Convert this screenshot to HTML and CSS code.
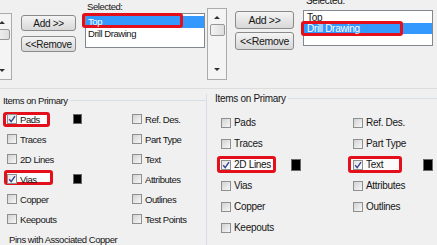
FILE: index.html
```html
<!DOCTYPE html>
<html lang="en">
  <head>
    <meta charset="UTF-8" />
    <meta name="viewport" content="width=device-width, initial-scale=1.0" />
    <title>Drill Drawing Layers</title>
    <link rel="stylesheet" href="styles.css">
  </head>
  <body>
    <div class="screen">
      <section class="panel panel-a">
        <div class="transfer">
          <div class="scrollbar">
            <span class="arrow up"></span>
            <span class="thumb"></span>
            <span class="arrow down"></span>
          </div>
          <div class="buttons">
            <button class="btn">Add &gt;&gt;</button>
            <button class="btn">&lt;&lt;Remove</button>
          </div>
          <div class="selected">
            <div class="caption">Selected:</div>
            <ul class="listbox">
              <li class="item active marked mark-top">Top</li>
              <li class="item">Drill Drawing</li>
            </ul>
          </div>
        </div>

        <div class="group">
          <div class="group-head"><span>Items on Primary</span></div>
          <div class="options">
            <div class="opt marked mark-pads"><span class="box checked"><svg width="8" height="8" viewBox="0 0 8 8"><polyline points="1.2,4.2 3.2,6.6 7,1.2" /></svg></span><span class="name">Pads</span><span class="swatch"></span></div>
            <div class="opt"><span class="box"></span><span class="name">Traces</span></div>
            <div class="opt"><span class="box"></span><span class="name">2D Lines</span></div>
            <div class="opt marked mark-vias"><span class="box checked"><svg width="8" height="8" viewBox="0 0 8 8"><polyline points="1.2,4.2 3.2,6.6 7,1.2" /></svg></span><span class="name">Vias</span><span class="swatch"></span></div>
            <div class="opt"><span class="box"></span><span class="name">Copper</span></div>
            <div class="opt"><span class="box"></span><span class="name">Keepouts</span></div>
            <div class="opt"><span class="box"></span><span class="name">Ref. Des.</span></div>
            <div class="opt"><span class="box"></span><span class="name">Part Type</span></div>
            <div class="opt"><span class="box"></span><span class="name">Text</span></div>
            <div class="opt"><span class="box"></span><span class="name">Attributes</span></div>
            <div class="opt"><span class="box"></span><span class="name">Outlines</span></div>
            <div class="opt"><span class="box"></span><span class="name">Test Points</span></div>
          </div>
          <div class="group-head sub"><span>Pins with Associated Copper</span></div>
        </div>
      </section>

      <section class="panel panel-b">
        <div class="transfer">
          <div class="scrollbar">
            <span class="arrow up"></span>
            <span class="thumb"></span>
            <span class="arrow down"></span>
          </div>
          <div class="buttons">
            <button class="btn">Add &gt;&gt;</button>
            <button class="btn">&lt;&lt;Remove</button>
          </div>
          <div class="selected">
            <div class="caption">Selected:</div>
            <ul class="listbox">
              <li class="item">Top</li>
              <li class="item active marked mark-drill">Drill Drawing</li>
            </ul>
          </div>
        </div>

        <div class="group">
          <div class="group-head"><span>Items on Primary</span></div>
          <div class="options">
            <div class="opt"><span class="box"></span><span class="name">Pads</span></div>
            <div class="opt"><span class="box"></span><span class="name">Traces</span></div>
            <div class="opt marked mark-lines"><span class="box checked"><svg width="8" height="8" viewBox="0 0 8 8"><polyline points="1.2,4.2 3.2,6.6 7,1.2" /></svg></span><span class="name">2D Lines</span><span class="swatch"></span></div>
            <div class="opt"><span class="box"></span><span class="name">Vias</span></div>
            <div class="opt"><span class="box"></span><span class="name">Copper</span></div>
            <div class="opt"><span class="box"></span><span class="name">Keepouts</span></div>
            <div class="opt"><span class="box"></span><span class="name">Ref. Des.</span></div>
            <div class="opt"><span class="box"></span><span class="name">Part Type</span></div>
            <div class="opt marked mark-text"><span class="box checked"><svg width="8" height="8" viewBox="0 0 8 8"><polyline points="1.2,4.2 3.2,6.6 7,1.2" /></svg></span><span class="name">Text</span><span class="swatch"></span></div>
            <div class="opt"><span class="box"></span><span class="name">Attributes</span></div>
            <div class="opt"><span class="box"></span><span class="name">Outlines</span></div>
          </div>
        </div>
      </section>
    </div>
  </body>
</html>
```

FILE: styles.css
```css
body {
  margin: 0;
  background-color: #f0f0f0;
  font-family: "Liberation Sans", Arial, sans-serif;
  font-size: 9.5px;
  letter-spacing: -0.45px;
  color: #151515;
  overflow: hidden;
}
.screen {
  display: flex;
  width: 437px;
  height: 245px;
  overflow: hidden;
}
.panel {
  flex: none;
}
.panel-a {
  width: 207px;
}
.panel-b {
  width: 230px;
  font-size: 10px;
  letter-spacing: -0.3px;
}

/* top: list transfer */
.transfer {
  display: flex;
  align-items: flex-start;
  height: 88px;
  border-bottom: 1px solid #dcdcdc;
}
.scrollbar {
  box-sizing: border-box;
  width: 20px;
  flex: none;
  display: flex;
  flex-direction: column;
  align-items: center;
  border: 1px solid #ababab;
  background-color: #f4f4f4;
}
.arrow {
  width: 0;
  height: 0;
  border-left: 3px solid transparent;
  border-right: 3px solid transparent;
}
.arrow.up {
  border-bottom: 3px solid #303030;
}
.arrow.down {
  margin-top: auto;
  border-top: 3px solid #303030;
}
.thumb {
  box-sizing: border-box;
  width: 15px;
  height: 11px;
  border: 1px solid #979797;
  border-radius: 2px;
  background: linear-gradient(to right, #f3f3f3, #dedede);
}
.buttons {
  display: flex;
  flex-direction: column;
  flex: none;
}
.btn {
  box-sizing: border-box;
  padding: 0;
  border: 1px solid #8a8a8a;
  border-radius: 3px;
  background: linear-gradient(#f4f4f4, #e6e6e6 50%, #d8d8d8);
  font: inherit;
  font-size: 10px;
  letter-spacing: -0.3px;
  color: #151515;
}
.selected {
  flex: none;
}
.caption {
  line-height: 13px;
}
.listbox {
  box-sizing: border-box;
  margin: 0;
  padding: 0;
  list-style: none;
  border: 1px solid #828790;
  background-color: #fff;
}
.item {
  white-space: nowrap;
}
.item.active {
  background-color: #3399ff;
  color: #fff;
}

.panel-a .scrollbar {
  margin: 13px 0 0 -8px;
  height: 67px;
  padding: 7px 0 7px;
}
.panel-a .arrow.up {
  margin-bottom: 5px;
}
.panel-a .buttons {
  margin: 15px 0 0 9px;
  gap: 5px;
}
.panel-a .btn {
  width: 55px;
  height: 16px;
}
.panel-a .selected {
  margin-left: 9px;
}
.panel-a .caption {
  padding-left: 2px;
}
.panel-a .listbox {
  width: 120px;
  height: 35px;
  padding-top: 2px;
}
.panel-a .item {
  line-height: 12px;
  padding-left: 2px;
}

.panel-b .scrollbar {
  margin-top: 8px;
  height: 72px;
  padding: 7px 0 8px;
}
.panel-b .arrow.up {
  margin-bottom: 5px;
}
.panel-b .thumb {
  height: 12px;
}
.panel-b .buttons {
  margin: 11px 0 0 8px;
  gap: 3px;
}
.panel-b .btn {
  width: 59px;
  height: 18px;
  font-size: 10.5px;
}
.panel-b .selected {
  margin: -5px 0 0 9px;
}
.panel-b .caption {
  line-height: 12px;
  margin-bottom: 3px;
  padding-left: 3px;
}
.panel-b .listbox {
  width: 130px;
  height: 36px;
  padding-top: 1px;
}
.panel-b .item {
  line-height: 11px;
  padding-left: 3px;
}

/* bottom: group box */
.group-head {
  display: flex;
  align-items: center;
  height: 12px;
  white-space: nowrap;
}
.group-head::after {
  content: "";
  flex: 1;
  margin-left: 2px;
  border-top: 1px solid #d5dfe5;
}
.panel-a .group {
  border-right: 1px solid #d5dfe5;
}
.panel-a .group-head {
  margin-top: 5px;
  padding-left: 3px;
}
.panel-a .group-head.sub {
  margin-top: 4px;
  padding-left: 9px;
}
.panel-a .group-head.sub::after {
  border-top-color: transparent;
}
.panel-b .group-head {
  margin-top: 3px;
  padding-left: 8px;
}
.options {
  display: grid;
  grid-auto-flow: column;
}
.panel-a .options {
  padding: 3px 0 0 7px;
  grid-template-columns: 125px auto;
  grid-template-rows: repeat(6, 20px);
}
.panel-b .options {
  padding: 8px 0 0 14px;
  grid-template-columns: 132px auto;
  grid-template-rows: repeat(6, 21px);
}
.opt {
  display: flex;
  align-items: center;
  position: relative;
  z-index: 0;
  white-space: nowrap;
}
.box {
  box-sizing: border-box;
  width: 10px;
  height: 10px;
  flex: none;
  display: flex;
  align-items: center;
  justify-content: center;
  border: 1px solid #8e8f8f;
  background: linear-gradient(135deg, #d2d2d2, #f7f7f7);
}
.box.checked {
  background: linear-gradient(135deg, #e4e4e4, #fbfbfb);
}
.box svg polyline {
  fill: none;
  stroke: #34448f;
  stroke-width: 1.4;
}
.name {
  box-sizing: border-box;
  padding-left: 3px;
}
.panel-a .name {
  width: 56px;
}
.panel-b .name {
  width: 60px;
}
.swatch {
  box-sizing: border-box;
  width: 9px;
  height: 10px;
  background-color: #000;
  border: 1px solid #6a6a6a;
}
.panel-b .swatch {
  width: 10px;
  height: 12px;
}

/* red callouts drawn over the screenshot */
.marked {
  position: relative;
  z-index: 0;
}
.marked::before {
  content: "";
  position: absolute;
  z-index: -1;
  box-sizing: border-box;
  border: 3px solid #e3101b;
  border-radius: 3px;
}
.opt.marked::before {
  background-color: #fbfbfb;
}
.mark-top::before {
  left: -4px;
  top: -3px;
  width: 101px;
  height: 15px;
}
.mark-drill::before {
  left: -3px;
  top: -2px;
  width: 102px;
  height: 15px;
}
.mark-pads::before {
  left: -4px;
  top: 3px;
  width: 47px;
  height: 15px;
}
.mark-vias::before {
  left: -3px;
  top: 1px;
  width: 49px;
  height: 15px;
}
.mark-lines::before {
  left: -4px;
  top: 2px;
  width: 59px;
  height: 17px;
}
.mark-text::before {
  left: -5px;
  top: 2px;
  width: 54px;
  height: 17px;
}
```
